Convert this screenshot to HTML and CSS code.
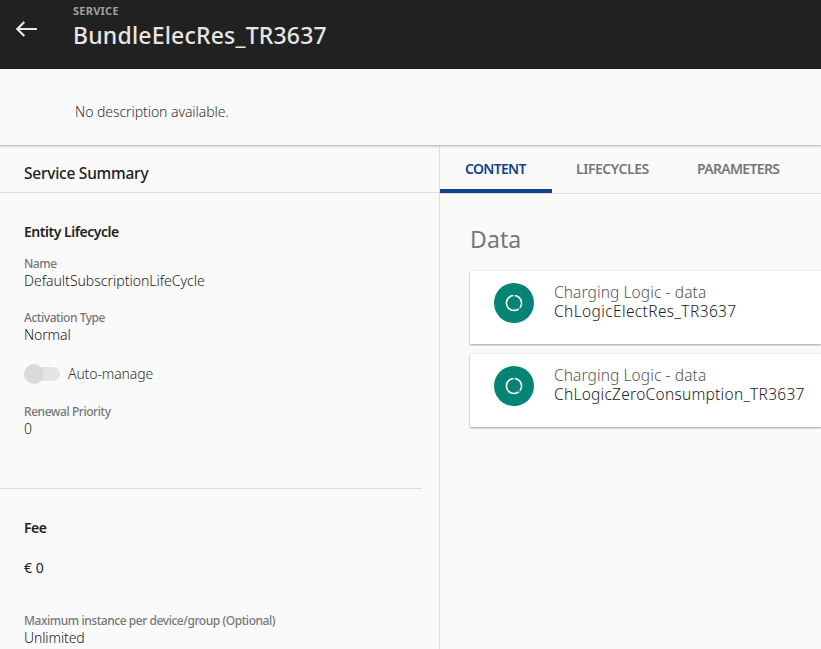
FILE: index.html
```html
<!DOCTYPE html>
<html lang="en">
<head>
<meta charset="utf-8">
<title>BundleElecRes_TR3637</title>
<link rel="stylesheet" href="styles.css">
</head>
<body>
<header class="topbar">
  <svg class="back" viewBox="0 0 22 18" width="22" height="18"><path d="M9.300 2 2.300 9l7 7M2.300 9H22" fill="none" stroke="#e8e8e8" stroke-width="2.200"/></svg>
  <div>
    <div class="kicker"><span>SERVICE</span></div>
    <h1 class="title"><span>BundleElecRes_TR3637</span></h1>
  </div>
</header>
<section class="description"><span>No description available.</span></section>
<main class="columns">
  <aside class="summary">
    <h2 class="summary-title"><span>Service Summary</span></h2>
    <section class="group lifecycle">
      <h3 class="group-title">Entity Lifecycle</h3>
      <div class="field"><div class="label">Name</div><div class="value">DefaultSubscriptionLifeCycle</div></div>
      <div class="field"><div class="label">Activation Type</div><div class="value short">Normal</div></div>
      <div class="toggle-row"><span class="toggle"><span class="knob"></span></span><span class="short">Auto-manage</span></div>
      <div class="field"><div class="label">Renewal Priority</div><div class="value">0</div></div>
    </section>
    <section class="group fee">
      <h3 class="group-title">Fee</h3>
      <div class="amount">€ 0</div>
      <div class="field"><div class="label">Maximum instance per device/group (Optional)</div><div class="value short">Unlimited</div></div>
    </section>
  </aside>
  <section class="detail">
    <nav class="tabs">
      <div class="tab active">CONTENT</div>
      <div class="tab lifecycles">LIFECYCLES</div>
      <div class="tab parameters">PARAMETERS</div>
    </nav>
    <h2 class="data-title">Data</h2>
    <article class="card">
      <svg class="icon" viewBox="0 0 40 40" width="40" height="40"><circle cx="20" cy="20" r="20" fill="#048475"/><circle cx="20" cy="20" r="7.6" fill="none" stroke="#fff" stroke-width="1.5"/><path d="M20 14v-4M24 24l3 3" stroke="#048475" stroke-width="1.4"/></svg>
      <div class="card-text"><div class="kind">Charging Logic - data</div><div class="item elect">ChLogicElectRes_TR3637</div></div>
    </article>
    <article class="card">
      <svg class="icon" viewBox="0 0 40 40" width="40" height="40"><circle cx="20" cy="20" r="20" fill="#048475"/><circle cx="20" cy="20" r="7.6" fill="none" stroke="#fff" stroke-width="1.5"/><path d="M20 14v-4M24 24l3 3" stroke="#048475" stroke-width="1.4"/></svg>
      <div class="card-text"><div class="kind">Charging Logic - data</div><div class="item zero">ChLogicZeroConsumption_TR3637</div></div>
    </article>
  </section>
</main>
</body>
</html>
```
FILE: styles.css
```css
* { box-sizing: border-box; }
body { margin: 0; height: 649px; overflow: hidden; background: #fafafa; color: #333; font: 300 14px/18px "Noto Sans", "Open Sans", sans-serif; white-space: nowrap; }
h1, h2, h3 { margin: 0; }
.topbar { display: flex; height: 69px; background: #212121; border-bottom: 1px solid #181818; }
.back { margin: 20px 36px 0 15px; }
.kicker { padding-top: 3px; font-size: 11px; line-height: 16px; font-weight: 700; letter-spacing: .25px; color: #a0a0a0; }
.title { font-size: 23px; line-height: 32px; font-weight: 500; letter-spacing: .19px; color: #e6e6e6; }
.description { height: 77px; padding: 34px 0 0 75px; border-bottom: 1px solid #c5c5c5; box-shadow: 0 1px 2px rgba(0,0,0,.14); position: relative; letter-spacing: -.06px; }
.columns { display: flex; height: 503px; }
.summary { width: 440px; flex: none; border-right: 1px solid #dcdcdc; }
.summary-title { height: 47px; padding: 17px 0 0 24px; border-bottom: 1px solid #dcdcdc; font-size: 15.5px; line-height: 20px; font-weight: 500; letter-spacing: -.25px; color: #222; }
.group { padding-left: 24px; }
.lifecycle { width: 422px; height: 296px; padding-top: 30px; border-bottom: 1px solid #dcdcdc; }
.group-title { height: 32px; font-size: 14px; line-height: 18px; font-weight: 600; letter-spacing: -.47px; color: #222; }
.field { height: 54px; }
.label { font-size: 12px; line-height: 17px; font-weight: 500; letter-spacing: -.45px; color: #777; }
.value { line-height: 18px; color: #222; }
.short { letter-spacing: -.12px; }
.toggle-row { display: flex; align-items: center; gap: 8px; height: 20px; margin: 1px 0 19px; }
.toggle { width: 36px; height: 14px; border-radius: 7px; background: #e4e4e4; display: flex; align-items: center; }
.knob { width: 20px; height: 20px; flex: none; border-radius: 50%; background: #dadada; }
.fee { padding-top: 30px; }
.fee .group-title { height: 40px; }
.amount { height: 53px; font-weight: 400; color: #222; }
.detail { flex: 1; min-width: 0; }
.tabs { display: flex; height: 48px; border-bottom: 1px solid #dcdcdc; font-weight: 600; color: #777; }
.tab { height: 47px; padding: 14px 24px 0; }
.active { width: 112px; padding-left: 25px; letter-spacing: -.7px; color: #124191; border-bottom: 4px solid #124191; }
.lifecycles { width: 121px; letter-spacing: -.45px; }
.parameters { letter-spacing: -.68px; }
.data-title { height: 77px; margin-left: 30px; padding-top: 29px; font-size: 23px; line-height: 32px; font-weight: 400; letter-spacing: .1px; color: #777; }
.card { display: flex; height: 73px; margin: 0 0 10px 30px; padding: 12px 0 0 24px; background: #fff; box-shadow: 0 1px 2px rgba(0,0,0,.35), 0 0 1px rgba(0,0,0,.12); }
.icon { margin-right: 20px; flex: none; }
.kind, .item { font-size: 15.5px; line-height: 19px; letter-spacing: .1px; color: #555; }
.item { color: #222; }
.elect { letter-spacing: .38px; }
.zero { letter-spacing: .26px; }
```
